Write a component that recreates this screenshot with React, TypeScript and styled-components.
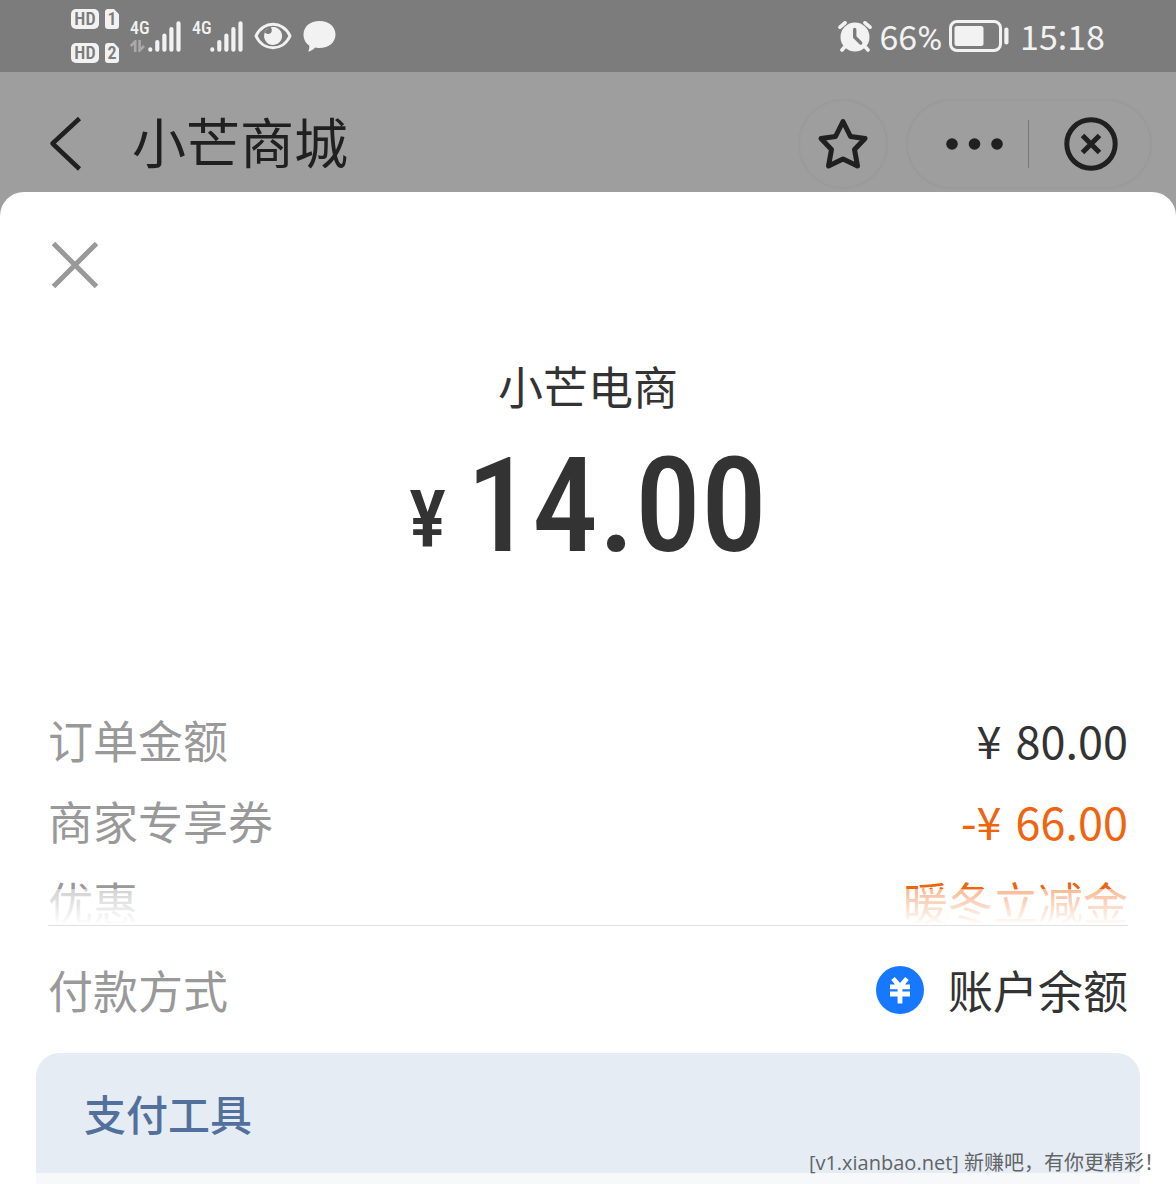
import React from 'react';
import styled, { createGlobalStyle } from 'styled-components';

const ink = '#202020';
const dark = '#333333';
const grey = '#999999';
const orange = '#f0640f';
const cond = '"Roboto Condensed", Roboto, sans-serif';

const Global = createGlobalStyle`
  * { box-sizing: border-box; }
  body {
    margin: 0;
    background: #9e9e9e;
    color: ${dark};
    font-family: "Noto Sans CJK SC", "Noto Sans", sans-serif;
  }
  button {
    display: flex;
    align-items: center;
    justify-content: center;
    padding: 0;
    border: 0;
    background: none;
    color: inherit;
    font: inherit;
    cursor: pointer;
  }
  svg { display: block; flex: none; }
`;

const Page = styled.div`
  position: relative;
  display: flex;
  flex-direction: column;
  min-height: 100vh;
`;

/* ---------- status bar ---------- */

const StatusBar = styled.div`
  display: flex;
  align-items: center;
  justify-content: space-between;
  height: 72px;
  padding: 0 71px;
  background: #7c7c7c;
  color: #f2f2f2;
`;

const StatusGroup = styled.div<{ $gap: number }>`
  display: flex;
  align-items: center;
  gap: ${(p) => p.$gap}px;
`;

const SimStack = styled.div`
  display: grid;
  gap: 14px;
`;

const SimLine = styled.div`
  display: flex;
  gap: 6px;
  font: 600 18px/20px ${cond};
  color: #7c7c7c;
`;

const SimChip = styled.span<{ $w: number; $cut?: boolean }>`
  width: ${(p) => p.$w}px;
  height: 20px;
  border-radius: 5px;
  background: #f2f2f2;
  text-align: center;
  ${(p) => p.$cut && 'border-radius: 3px; clip-path: polygon(0 0, 64% 0, 100% 26%, 100% 100%, 0 100%);'}
`;

const Signal = styled.div`
  display: flex;
  gap: 1px;
  height: 31px;
`;

const Network = styled.div`
  display: flex;
  flex-direction: column;
  justify-content: space-between;
  width: 17px;
  font: 500 18px/14px ${cond};
`;

const StatusText = styled.span`
  font-size: 34px;
  line-height: 52px;
  white-space: nowrap;
`;

const PercentSign = styled.span`
  font-family: Roboto, sans-serif;
  line-height: 1;
`;

/* ---------- app header ---------- */

const Header = styled.header`
  display: flex;
  align-items: center;
  height: 120px;
  padding: 24px 24px 0 45px;
  color: ${ink};
`;

const BackButton = styled.button`
  width: 40px;
  height: 56px;
`;

const AppTitle = styled.h1`
  flex: 1;
  margin: 0 0 0 47px;
  padding-bottom: 6px;
  font-size: 54px;
  line-height: 72px;
  font-weight: 400;
`;

const RoundButton = styled.button`
  width: 90px;
  height: 90px;
  margin-right: 18px;
  border: 2px solid #9a9a9a;
  border-radius: 45px;
`;

const Capsule = styled.div`
  display: grid;
  grid-template-columns: 120px 1px 1fr;
  align-items: center;
  width: 246px;
  height: 90px;
  border: 2px solid #9a9a9a;
  border-radius: 45px;
`;

const CapsuleButton = styled.button<{ $inset: number }>`
  height: 86px;
  padding-left: ${(p) => p.$inset}px;
`;

const CapsuleRule = styled.span`
  height: 48px;
  background: #777777;
`;

/* ---------- payment sheet ---------- */

const Sheet = styled.main`
  display: flex;
  flex: 1;
  flex-direction: column;
  padding: 46px 48px 0;
  border-radius: 24px 24px 0 0;
  background: #ffffff;
`;

const CloseButton = styled.button`
  width: 54px;
  height: 54px;
`;

const Merchant = styled.h2`
  margin: 64px 0 0;
  font-size: 45px;
  line-height: 60px;
  font-weight: 400;
  text-align: center;
`;

const Amount = styled.p`
  display: flex;
  align-items: flex-end;
  justify-content: center;
  gap: 20px;
  margin: 30px 0 0;
  font: 500 132px/120px ${cond};
`;

const AmountSign = styled.span`
  font-size: 79px;
  line-height: 92px;
`;

const Details = styled.dl`
  position: relative;
  max-height: 227px;
  margin: 133px 0 0;
  overflow: hidden;
  border-bottom: 1px solid #e0e0e0;

  &::after {
    content: '';
    position: absolute;
    right: 0;
    bottom: 0;
    left: 0;
    height: 36px;
    background: linear-gradient(rgba(255, 255, 255, 0.55), #ffffff);
  }
`;

const Row = styled.div<{ $h: number }>`
  display: flex;
  align-items: center;
  justify-content: space-between;
  height: ${(p) => p.$h}px;
  font-size: 45px;
  line-height: 66px;
`;

const Label = styled.dt`
  color: ${grey};
`;

const Value = styled.dd<{ $color?: string }>`
  display: flex;
  align-items: center;
  margin: 0;
  color: ${(p) => p.$color ?? dark};
`;

const Currency = styled.span`
  margin-right: 14px;
`;

const Method = styled.button`
  gap: 24px;
`;

const MethodList = styled.dl`
  margin: 0;
`;

const Panel = styled.section`
  display: flex;
  flex: 1;
  flex-direction: column;
  margin: 0 -12px;
  overflow: hidden;
  border-radius: 24px 24px 0 0;
  background: #f6f8fa;
`;

const PanelTitle = styled.h3`
  margin: 0;
  padding: 28px 48px;
  background: #e6ecf4;
  color: #53709d;
  font-size: 42px;
  line-height: 64px;
  font-weight: 500;
`;

const Watermark = styled.div`
  position: absolute;
  right: 12px;
  bottom: 7px;
  color: #626466;
  font: 20px/28px "Open Sans", "Noto Sans CJK SC", sans-serif;
  white-space: nowrap;
`;

/* ---------- drawings ---------- */

const Bars = () => (
  <svg width="33" height="31" viewBox="0 0 33 31" fill="none" stroke="#f2f2f2" strokeWidth="4.2" strokeLinecap="round" aria-hidden="true">
    <path d="M2.3 28.4v.3M9.3 21v7.7M16.4 14.6v14.1M23.4 8v20.7M30.5 2.3v26.4" />
  </svg>
);

const DataArrows = () => (
  <svg width="15" height="12" viewBox="0 0 15 12" fill="none" stroke="#a9a9a9" strokeWidth="2.6" aria-hidden="true">
    <path d="M5.2 12V1.5L.8 6M9.6 0v10.5L14 6" />
  </svg>
);

const Eye = () => (
  <svg width="38" height="28" viewBox="0 0 38 28" aria-hidden="true">
    <path d="M2 14C9-1.600 29-1.600 36 14 29 29.600 9 29.600 2 14Z" fill="none" stroke="#f2f2f2" strokeWidth="3" strokeLinejoin="round" />
    <path d="M14.500 6.200A9 9 0 1 0 24 6.400C20.500 4.300 17.500 5 16.800 5.500 19 8.200 17.500 12.300 13.800 12 11.500 11.800 10.600 10.500 10.800 9.800 11.800 7.800 13 6.800 14.500 6.200Z" fill="#f2f2f2" />
  </svg>
);

const Bubble = () => (
  <svg width="33" height="31" viewBox="0 0 33 31" fill="#f2f2f2" aria-hidden="true">
    <path d="M16.500 0C26 0 32.500 5.800 32.500 13.500S26 27 16.500 27C14.500 27 13 26.800 12 26.500 10 29 7.500 30.300 5.200 30.500 6.200 28.500 6.500 26.500 6.300 24.500 2.500 22.200.5 18 .5 13.500.500 5.800 7 0 16.500 0Z" />
  </svg>
);

const Alarm = () => (
  <svg width="34" height="31" viewBox="0 0 34 31" aria-hidden="true">
    <circle cx="17" cy="16" r="14.500" fill="#f2f2f2" />
    <path d="M2 6.200 7 1.800M32 6.200 27 1.800M7.500 25 4 29M26.500 25 30 29" stroke="#f2f2f2" strokeWidth="3.600" strokeLinecap="round" />
    <path d="M16.700 8.500V16l6 6" fill="none" stroke="#7c7c7c" strokeWidth="3.400" strokeLinecap="round" strokeLinejoin="round" />
  </svg>
);

const Battery = () => (
  <svg width="60" height="32" viewBox="0 0 60 32" aria-hidden="true">
    <rect x="1.500" y="1.500" width="50" height="29" rx="6.500" fill="none" stroke="#f2f2f2" strokeWidth="3" />
    <rect x="5.500" y="6" width="29" height="20" rx="2.500" fill="#f2f2f2" />
    <rect x="55.300" y="7.500" width="4.200" height="17" rx="2" fill="#f2f2f2" />
  </svg>
);

const SimRow = ({ n }: { n: number }) => (
  <SimLine>
    <SimChip $w={28}>HD</SimChip>
    <SimChip $w={14} $cut>{n}</SimChip>
  </SimLine>
);

export default function App() {
  return (
    <Page>
      <Global />
      <StatusBar>
        <StatusGroup $gap={11}>
          <SimStack>
            <SimRow n={1} />
            <SimRow n={2} />
          </SimStack>
          <Signal>
            <Network>
              4G
              <DataArrows />
            </Network>
            <Bars />
          </Signal>
          <Signal>
            <Network>4G</Network>
            <Bars />
          </Signal>
          <Eye />
          <Bubble />
        </StatusGroup>
        <StatusGroup $gap={7}>
          <Alarm />
          <StatusText>66<PercentSign>%</PercentSign></StatusText>
          <StatusGroup $gap={11}>
            <Battery />
            <StatusText>15:18</StatusText>
          </StatusGroup>
        </StatusGroup>
      </StatusBar>

      <Header>
        <BackButton aria-label="返回">
          <svg width="40" height="56" viewBox="0 0 40 56" fill="none" stroke={ink} strokeWidth="4.500" aria-hidden="true">
            <path d="M34.500 2.500 7.500 27.500 34.500 53" strokeLinejoin="round" />
          </svg>
        </BackButton>
        <AppTitle>小芒商城</AppTitle>
        <RoundButton aria-label="收藏">
          <svg width="54" height="54" viewBox="0 0 54 54" fill="none" stroke={ink} strokeWidth="5" strokeLinejoin="round" aria-hidden="true">
            <path d="M27 4.500 34.500 19.500 49 21.500 38.500 32.500 41.500 49 27 42 12.500 49 15.500 32.500 5 21.500 19.500 19.500Z" />
          </svg>
        </RoundButton>
        <Capsule>
          <CapsuleButton $inset={14} aria-label="更多">
            <svg width="58" height="12" viewBox="0 0 58 12" fill={ink} aria-hidden="true">
              <circle cx="6" cy="6" r="5.800" />
              <circle cx="28.500" cy="6" r="5.800" />
              <circle cx="51" cy="6" r="5.800" />
            </svg>
          </CapsuleButton>
          <CapsuleRule />
          <CapsuleButton $inset={2} aria-label="关闭小程序">
            <svg width="54" height="54" viewBox="0 0 54 54" fill="none" stroke={ink} strokeWidth="5" aria-hidden="true">
              <circle cx="27" cy="27" r="24.200" />
              <path d="M18.500 18.500l17 17M35.500 18.500l-17 17" />
            </svg>
          </CapsuleButton>
        </Capsule>
      </Header>

      <Sheet>
        <CloseButton aria-label="关闭">
          <svg width="54" height="54" viewBox="0 0 54 54" fill="none" stroke="#999999" strokeWidth="5" aria-hidden="true">
            <path d="M5.500 5.500l43 43M48.500 5.500l-43 43" />
          </svg>
        </CloseButton>
        <Merchant>小芒电商</Merchant>
        <Amount>
          <AmountSign>¥</AmountSign>
          <span>14.00</span>
        </Amount>

        <Details>
          <Row $h={81}>
            <Label>订单金额</Label>
            <Value><Currency>¥</Currency>80.00</Value>
          </Row>
          <Row $h={81}>
            <Label>商家专享券</Label>
            <Value $color={orange}><Currency>-¥</Currency>66.00</Value>
          </Row>
          <Row $h={81}>
            <Label>优惠</Label>
            <Value $color={orange}>暖冬立减金</Value>
          </Row>
        </Details>

        <MethodList>
          <Row $h={127}>
            <Label>付款方式</Label>
            <Value>
              <Method>
                <svg width="48" height="48" viewBox="0 0 48 48" aria-hidden="true">
                  <circle cx="24" cy="24" r="24" fill="#1677ff" />
                  <path d="M17 12.500 24 20.500 31 12.500M14 20.800H34M14 28H34M24 20V37.500" fill="none" stroke="#ffffff" strokeWidth="4.800" />
                </svg>
                账户余额
              </Method>
            </Value>
          </Row>
        </MethodList>

        <Panel>
          <PanelTitle>支付工具</PanelTitle>
        </Panel>
      </Sheet>
      <Watermark>[v1.xianbao.net] 新赚吧，有你更精彩！</Watermark>
    </Page>
  );
}
